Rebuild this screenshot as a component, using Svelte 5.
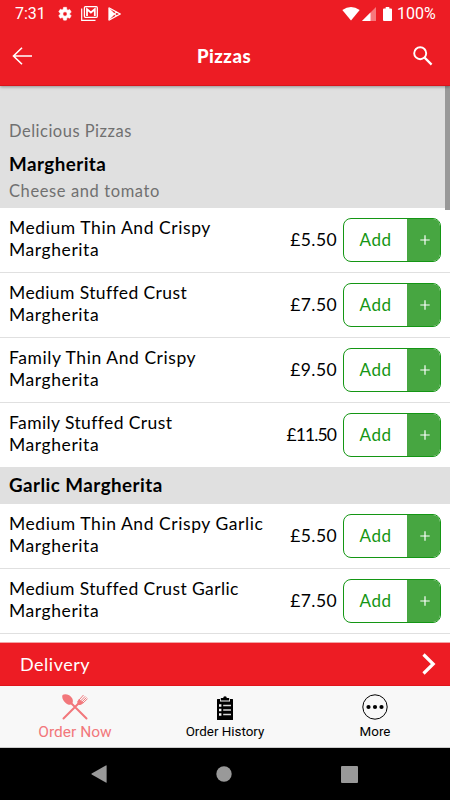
<script>
  const plain = ['Medium Thin And Crispy', 'Medium Stuffed Crust', 'Family Thin And Crispy', 'Family Stuffed Crust'];
  const prices = ['5.50', '7.50', '9.50', '11.50'];
  const margherita = plain.map((name, i) => ({ name, price: prices[i] }));
  const garlic = [
    { name: 'Medium Thin And Crispy Garlic', price: '5.50' },
    { name: 'Medium Stuffed Crust Garlic', price: '7.50' }
  ];
</script>

{#snippet row(item)}
  <div class="row">
    <div class="name"><span class:stuffed={item.name.includes('Stuffed')}>{item.name}</span><br /><span>Margherita</span></div>
    <div class="price" class:long={item.price.length > 4}>£{item.price}</div>
    <button class="add"><span class="label">Add</span><span class="plus"><svg width="10" height="10" viewBox="0 0 10 10"><path d="M5 .3v9.400M.3 5h9.400" stroke="#fff" stroke-width="1.200" /></svg></span></button>
  </div>
{/snippet}

<div class="screen">
  <header>
    <div class="status">
      <span class="time">7:31</span>
      <svg class="gear" width="16" height="16" viewBox="0 0 24 24" fill="#fff"><path d="M19.14 12.94c.04-.3.06-.61.06-.94s-.02-.64-.07-.94l2.03-1.58a.49.49 0 0 0 .12-.61l-1.92-3.32a.49.49 0 0 0-.59-.22l-2.39.96a7 7 0 0 0-1.62-.94l-.36-2.54A.48.48 0 0 0 13.92 2h-3.84a.48.48 0 0 0-.48.41l-.36 2.54a7 7 0 0 0-1.62.94l-2.39-.96a.48.48 0 0 0-.59.22L2.72 8.47a.48.48 0 0 0 .12.61l2.03 1.58c-.05.3-.09.63-.09.94s.02.64.07.94l-2.03 1.58a.49.49 0 0 0-.12.61l1.92 3.32c.12.22.37.29.59.22l2.39-.96c.5.38 1.03.7 1.62.94l.36 2.54c.05.24.24.41.48.41h3.84c.24 0 .44-.17.47-.41l.36-2.54a7 7 0 0 0 1.62-.94l2.39.96c.22.08.47 0 .59-.22l1.92-3.32a.48.48 0 0 0-.12-.61zM12 15.2a3.2 3.2 0 1 1 0-6.4 3.200 3.200 0 0 1 0 6.400z" stroke="#fff" stroke-width=".8" /></svg>
      <svg class="mail" width="17" height="15" viewBox="0 0 17 15" fill="none" stroke="#fff"><path d="M.7 2.5v11.8h13.8" stroke-width="1.2" /><rect x="3.4" y=".7" width="12.9" height="10.6" rx="1" stroke-width="1.3" /><path d="M6 10V3.2l3.9 3.3 3.9-3.3V10" stroke-width="1.8" /></svg>
      <svg class="play" width="13" height="14" viewBox="0 0 13 14"><path d="M.4.3v13.400L7 7z" fill="#fff" /><path d="M.9.8 12 7 .9 13.200M6.300 7 9 4.800M6.300 7 9 9.200" stroke="#fff" stroke-width="1.200" fill="none" /></svg>
      <span class="grow"></span>
      <svg width="18" height="14" viewBox="0 0 18 14"><path d="M9 13.5.3 3Q9-3 17.7 3z" fill="#fff" /></svg>
      <svg class="cell" width="14" height="14" viewBox="0 0 14 14"><path d="M14 0v14H0z" fill="#f7777c" /><path d="M8.500 5.500V14H0z" fill="#fff" /></svg>
      <svg class="battery" width="9" height="14" viewBox="0 0 9 14"><path d="M2.7 0h3.6v1.4H8a1 1 0 0 1 1 1V13a1 1 0 0 1-1 1H1a1 1 0 0 1-1-1V2.400a1 1 0 0 1 1-1h1.700z" fill="#fff" /></svg>
      <span class="percent">100%</span>
    </div>
    <div class="bar">
      <svg width="20" height="18" viewBox="0 0 20 18" fill="none" stroke="#fff" stroke-width="1.600"><path d="M20 9H1.500M10 .7 1.500 9l8.500 8.300" /></svg>
      <h1>Pizzas</h1>
      <svg width="20" height="20" viewBox="0 0 20 20" fill="none" stroke="#fff"><circle cx="7.200" cy="7.200" r="6" stroke-width="1.900" /><path d="m11.600 11.600 7 7" stroke-width="2.200" /></svg>
    </div>
  </header>

  <main>
    <section class="intro">
      <p class="sub first">Delicious Pizzas</p>
      <h2>Margherita</h2>
      <p class="sub second">Cheese and tomato</p>
    </section>
    {#each margherita as item}{@render row(item)}{/each}
    <section class="heading"><h2>Garlic Margherita</h2></section>
    {#each garlic as item}{@render row(item)}{/each}
    <div class="scroll"></div>
  </main>

  <div class="delivery">
    <span>Delivery</span>
    <svg width="14" height="22" viewBox="0 0 14 22"><path d="m1.500 1.500 9.700 9.500-9.700 9.500" fill="none" stroke="#fff" stroke-width="3.200" /></svg>
  </div>

  <nav class="tabs">
    <div class="tab active">
      <svg width="26" height="26" viewBox="0 0 26 26"><path d="M.6 1C3-.7 8.500.8 10.300 4.500c1 2.300.6 4.500-.5 5.500s-3.500 1-5.600-.6C.7 6.800-.5 2.700.6 1z" fill="#f2777b" /><path d="m9 9 15.500 15.500M1.500 24.500 17.500 8.500" stroke="#f2777b" stroke-width="2" stroke-linecap="round" /><path d="M15.500 7.200 17 5l3 2.500 1.500 1.500-2.500 1.700q-2 .8-3-.2t-.5-3.300z" fill="#f2777b" /><path d="m17 6 4.500-5M18.300 7.300l4.900-5M19.600 8.300l4.900-4.800M20.800 9.200l4.700-4.500" stroke="#f2777b" stroke-width="1" fill="none" /></svg>
      <span>Order Now</span>
    </div>
    <div class="tab">
      <svg width="18" height="24" viewBox="0 0 18 24"><path d="M1.500 3H4v2.500h10V3h2.500q.5 0 .5.5v20q0 .5-.5.500h-15Q1 24 1 23.500v-20Q1 3 1.500 3z" /><path d="M4.800 2h2.400a1.800 1.800 0 0 1 3.600 0h2.400v2.400H4.800z" /><path d="M3 9.500h2.400M3 14h2.400M3 18.500h2.400" stroke="#f8f8f8" stroke-width="2.400" /><path d="M7.200 9.500h7.800M7.200 14h7.800M7.200 18.500h7.800" stroke="#d8d8d8" stroke-width="1.400" /></svg>
      <span>Order History</span>
    </div>
    <div class="tab more">
      <svg width="26" height="26" viewBox="0 0 26 26"><circle cx="13" cy="13" r="12.200" fill="none" stroke="#000" stroke-width="1" /><circle cx="6.500" cy="13" r="2.100" /><circle cx="13" cy="13" r="2.100" /><circle cx="19.500" cy="13" r="2.100" /></svg>
      <span>More</span>
    </div>
  </nav>

  <div class="system">
    <svg width="16" height="18" viewBox="0 0 16 18"><path d="M15.600.8v16.400q0 .8-.8.400L.700 9.600q-.7-.6 0-1.200L14.800.4q.8-.4.8.4z" fill="#999" /></svg>
    <svg width="16" height="16" viewBox="0 0 16 16"><circle cx="8" cy="8" r="7.700" fill="#999" /></svg>
    <svg width="17" height="17" viewBox="0 0 17 17"><rect width="17" height="17" rx="1" fill="#999" /></svg>
  </div>
</div>

<style>
  :global(body) { margin: 0; }
  * { box-sizing: border-box; }
  svg { display: block; flex: none; }
  .screen { width: 450px; height: 800px; display: flex; flex-direction: column; overflow: hidden; font-family: Lato, sans-serif; background: #fff; color: #000; }
  header { height: 86px; flex: none; background: #ed1c24; color: #fff; border-bottom: 1px solid #d9141b; box-shadow: 0 1px 3px rgba(0, 0, 0, .35); position: relative; z-index: 1; }
  .status { height: 27px; display: flex; align-items: center; padding: 0 15px 0 15px; font: 16px/27px Roboto, sans-serif; }
  .time { width: 42px; }
  .mail { margin-left: 8px; }
  .play { margin-left: 10px; }
  .grow { flex: 1; }
  .cell { margin-left: 2px; }
  .battery { margin-left: 7px; }
  .percent { margin-left: 5px; width: 38px; white-space: nowrap; }
  .bar { height: 58px; display: flex; align-items: center; justify-content: space-between; padding: 0 17px 0 12px; }
  h1 { margin: 0; font: 900 18.500px/24px Lato, sans-serif; letter-spacing: .5px; padding-left: 3px; }
  main { flex: none; height: 556px; position: relative; }
  .intro { height: 122px; background: #e0e0e0; padding: 33px 9px 0; }
  h2 { margin: 0; font-size: 18.800px; line-height: 24px; font-weight: 700; letter-spacing: .45px; }
  p { margin: 0; }
  .sub { font-size: 16.500px; line-height: 24px; color: #707070; letter-spacing: .5px; }
  .intro h2 { margin-top: 9px; }
  .second { margin-top: 3px; letter-spacing: .6px; }
  .heading { height: 36px; background: #e0e0e0; padding: 5px 9px 0; }
  .row { height: 65px; border-bottom: 1px solid #e0e0e0; display: flex; align-items: center; padding: 0 9px; }
  .name { flex: 1; font-size: 17.500px; line-height: 22px; letter-spacing: .57px; padding-bottom: 2px; white-space: nowrap; }
  .stuffed { letter-spacing: .4px; }
  .price { font-size: 17.500px; letter-spacing: .4px; margin-right: 6px; padding-bottom: 2px; }
  .long { letter-spacing: -.9px; margin-right: 7px; }
  .add { width: 98px; height: 44px; padding: 0; border: 1px solid #149614; border-radius: 8px; overflow: hidden; background: #fff; display: flex; font: 17px Lato, sans-serif; letter-spacing: .5px; }
  .label { flex: 1; color: #149614; line-height: 42px; }
  .plus { width: 33px; background: #47a641; height: 42px; display: flex; align-items: center; justify-content: center; padding-left: 2px; }
  .scroll { position: absolute; top: 0; right: 0; width: 5px; height: 124px; background: #999; }
  .delivery { height: 44px; flex: none; background: #ed1c24; border-top: 1px solid #f3a5a6; border-bottom: 1px solid #e0141b; color: #fff; display: flex; align-items: center; justify-content: space-between; padding: 0 14px 0 20px; font-size: 18px; letter-spacing: .5px; }
  .tabs { height: 62px; flex: none; display: flex; background: #f8f8f8; border-bottom: 1px solid #ccc; }
  .tab { flex: 1; display: flex; flex-direction: column; align-items: center; font: 13.400px/18px Roboto, sans-serif; padding-top: 10px; }
  .tab span { margin-top: 3px; }
  .tab.active { color: #f2777b; font-size: 15.500px; padding-top: 8px; }
  .tab.more { padding-top: 8px; }
  .system { flex: 1; background: #000; display: flex; align-items: center; justify-content: space-between; padding: 0 92px 0 91px; }
</style>
